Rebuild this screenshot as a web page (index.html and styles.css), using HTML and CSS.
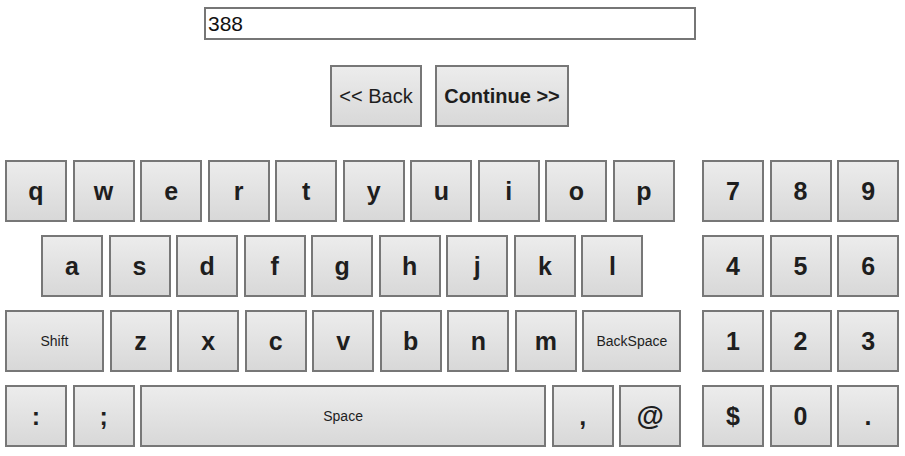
FILE: index.html
```html
<!DOCTYPE html>
<html>
<head>
<meta charset="utf-8">
<link rel="stylesheet" href="styles.css">
</head>
<body>
<div class="page">
  <div class="top">
    <input class="entry" type="text" value="388">
  </div>
  <div class="nav">
    <button class="btn back">&lt;&lt; Back</button>
    <button class="btn cont">Continue &gt;&gt;</button>
  </div>
  <div class="keyboard">
    <div class="main">
      <div class="row">
        <span class="key">q</span><span class="key">w</span><span class="key">e</span><span class="key">r</span><span class="key">t</span><span class="key">y</span><span class="key">u</span><span class="key">i</span><span class="key">o</span><span class="key">p</span>
      </div>
      <div class="row row2">
        <span class="key">a</span><span class="key">s</span><span class="key">d</span><span class="key">f</span><span class="key">g</span><span class="key">h</span><span class="key">j</span><span class="key">k</span><span class="key">l</span>
      </div>
      <div class="row">
        <span class="key wide small">Shift</span><span class="key">z</span><span class="key">x</span><span class="key">c</span><span class="key">v</span><span class="key">b</span><span class="key">n</span><span class="key">m</span><span class="key wide small">BackSpace</span>
      </div>
      <div class="row">
        <span class="key">:</span><span class="key">;</span><span class="key space small">Space</span><span class="key">,</span><span class="key at">@</span>
      </div>
    </div>
    <div class="numpad">
      <div class="row"><span class="key">7</span><span class="key">8</span><span class="key">9</span></div>
      <div class="row"><span class="key">4</span><span class="key">5</span><span class="key">6</span></div>
      <div class="row"><span class="key">1</span><span class="key">2</span><span class="key">3</span></div>
      <div class="row"><span class="key">$</span><span class="key">0</span><span class="key">.</span></div>
    </div>
  </div>
</div>
</body>
</html>
```
FILE: styles.css
```css
html, body {
  margin: 0;
  padding: 0;
  background: #ffffff;
}
body {
  font-family: "Liberation Sans", Arial, sans-serif;
  color: #1e1e1e;
}
.page {
  width: 905px;
  padding-top: 7px;
}
.top {
  display: flex;
  padding-left: 204px;
}
.entry {
  box-sizing: border-box;
  width: 492px;
  height: 33px;
  border: 2px solid #767676;
  padding: 0 2px;
  margin: 0;
  font-family: "Liberation Sans", Arial, sans-serif;
  font-size: 21px;
  color: #111;
  outline: none;
}
.nav {
  display: flex;
  gap: 13px;
  padding-left: 330px;
  margin-top: 25px;
}
.btn {
  box-sizing: border-box;
  height: 62px;
  border: 2px solid #777;
  background: linear-gradient(#ececec, #d8d8d8);
  font-family: "Liberation Sans", Arial, sans-serif;
  font-size: 20px;
  color: #1e1e1e;
  padding: 0;
  margin: 0;
}
.back { width: 92px; }
.cont { width: 134px; font-weight: bold; }
.keyboard {
  display: flex;
  margin-top: 33px;
  padding-left: 5px;
}
.main {
  display: flex;
  flex-direction: column;
  gap: 13px;
  width: 697px;
}
.numpad {
  display: flex;
  flex-direction: column;
  gap: 13px;
}
.row {
  display: flex;
  gap: 5.56px;
}
.row2 {
  padding-left: 36px;
}
.key {
  box-sizing: border-box;
  width: 62px;
  height: 62px;
  border: 2px solid #777;
  background: linear-gradient(#ececec, #d8d8d8);
  display: flex;
  align-items: center;
  justify-content: center;
  font-size: 25px;
  font-weight: bold;
  color: #1e1e1e;
}
.key.small {
  font-size: 14px;
  font-weight: normal;
}
.key.at { font-size: 28px; }
.key.wide { width: 99px; }
.key.space { width: 406px; }
```
